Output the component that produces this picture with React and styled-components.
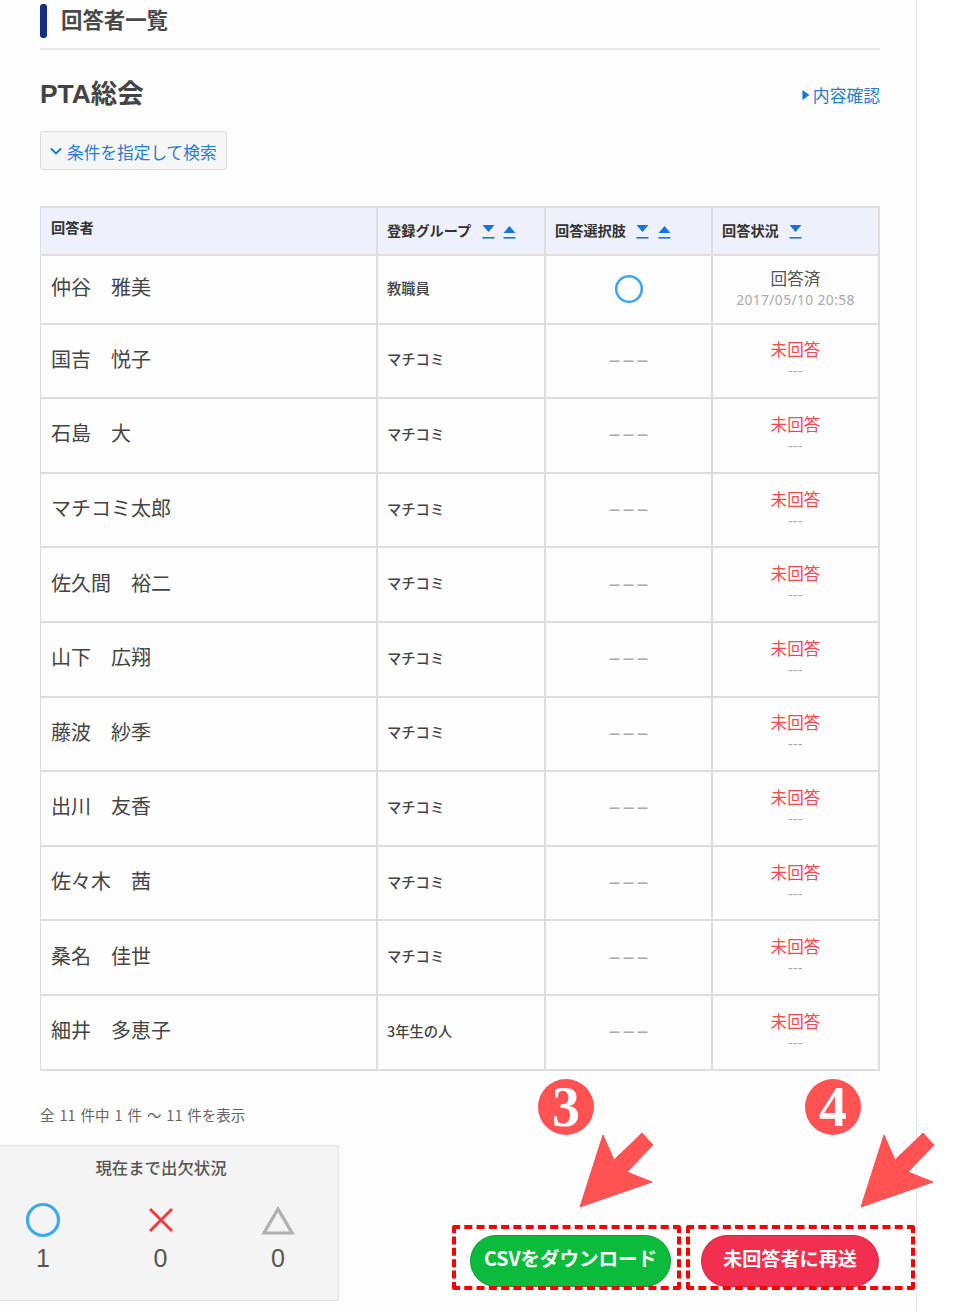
import React from "react";
import styled, { createGlobalStyle } from "styled-components";

const GlobalStyle = createGlobalStyle`
    html, body {
        margin: 0;
        padding: 0;
        background: #fff;
    }
    body {
        font-family: "Noto Sans CJK JP", "Noto Sans", sans-serif;
        color: #444;
    }
`;

const Page = styled.div`
    position: relative;
    width: 917px;
    height: 1312px;
    box-sizing: border-box;
    background: #fdfdfd;
    border-right: 1px solid #e4e4e4;
`;
const Content = styled.div`
    padding: 0 36px 0 40px;
`;
const SectionHead = styled.div`
    display: flex;
    align-items: center;
    gap: 14px;
    height: 50px;
    box-sizing: border-box;
    padding: 3px 0 9px;
    border-bottom: 2px solid #e6e6e6;
`;
const SectionBar = styled.span`
    width: 7px;
    height: 34px;
    border-radius: 3px;
    background: #152d85;
`;
const SectionTitle = styled.h2`
    margin: -4px 0 0;
    font-size: 21.4px;
    line-height: 30px;
    font-weight: 700;
    color: #4a4a4a;
`;
const TitleRow = styled.div`
    display: flex;
    justify-content: space-between;
    align-items: center;
    margin-top: 25px;
    height: 38px;
`;
const EventTitle = styled.h1`
    margin: 0;
    font-family: "Liberation Sans", "Noto Sans CJK JP", sans-serif;
    font-size: 26.4px;
    line-height: 38px;
    font-weight: 700;
    color: #444;
`;
const DetailLink = styled.a`
    display: flex;
    align-items: center;
    gap: 3px;
    margin-top: 2px;
    font-size: 16.8px;
    color: #2a7bd3;
    svg {
        display: block;
    }
`;
const SearchButton = styled.button`
    display: flex;
    align-items: center;
    gap: 5px;
    width: 187px;
    height: 39px;
    margin-top: 18px;
    padding: 2px 0 0 9px;
    box-sizing: border-box;
    background: #f6f6f6;
    border: 1px solid #dcdcdc;
    border-radius: 3px;
    font-family: inherit;
    font-size: 16.7px;
    white-space: nowrap;
    color: #2a7bd3;
    svg {
        flex-shrink: 0;
        margin-top: -2px;
    }
`;
const Table = styled.div`
    margin-top: 36px;
    display: grid;
    grid-template-columns: 337px 168px 167px 167px;
    border-top: 2px solid #dedede;
    border-left: 1px solid #dedede;
    width: 840px;
    box-sizing: border-box;
`;
const HeadCell = styled.div`
    display: flex;
    align-items: center;
    gap: 10.5px;
    height: 48px;
    padding: ${(p) => (p.$high ? "0 0 9px 10px" : "0 0 3px 9px")};
    box-sizing: border-box;
    background: #eef1fc;
    border-right: 2px solid #dedede;
    border-bottom: 2px solid #dedede;
    font-size: 14.2px;
    font-weight: 700;
    color: #333;
`;
const SortIcons = styled.span`
    display: flex;
    gap: 8.5px;
    margin-top: 4px;
`;
const Cell = styled.div`
    display: flex;
    align-items: center;
    justify-content: ${(p) => (p.$center ? "center" : "flex-start")};
    height: ${(p) => (p.$first ? "68.6px" : "74.6px")};
    padding: 0 10px;
    box-sizing: border-box;
    border-right: 2px solid #dedede;
    border-bottom: 2px solid #dedede;
`;
const NameText = styled.span`
    margin-bottom: 5px;
    font-size: 20px;
    color: #444;
    white-space: pre;
`;
const GroupText = styled.span`
    margin: 0 0 4px -1px;
    font-size: 14.3px;
    font-weight: 500;
    color: #444;
`;
const NoAnswer = styled.span`
    margin-bottom: 2px;
    font-size: 14px;
    font-weight: 700;
    color: #aaa;
`;
const ChoiceMark = styled.svg`
    margin-bottom: 1px;
`;
const StatusBox = styled.div`
    display: flex;
    flex-direction: column;
    align-items: center;
    margin-top: -4px;
`;
const StatusLabel = styled.span`
    font-size: 16.6px;
    line-height: 24px;
    color: ${(p) => (p.$pending ? "#f9494d" : "#555")};
`;
const StatusDate = styled.span`
    font-family: "Noto Sans", sans-serif;
    font-size: 13.8px;
    line-height: 19px;
    color: #aaa;
    letter-spacing: 0.4px;
`;
const CountText = styled.p`
    margin: 34px 0 0;
    font-size: 14.5px;
    line-height: 20px;
    word-spacing: 1.7px;
    color: #666;
`;
const BottomRow = styled.div`
    display: flex;
    justify-content: space-between;
    align-items: flex-start;
    padding-right: 37px;
    margin-top: 20px;
`;
const SummaryPanel = styled.div`
    width: 339px;
    height: 156px;
    box-sizing: border-box;
    padding-top: 9px;
    background: #f4f4f4;
    border: 1px solid #e2e2e2;
    border-left: none;
    border-radius: 0 3px 3px 0;
`;
const SummaryTitle = styled.div`
    text-align: center;
    font-size: 16.4px;
    line-height: 24px;
    font-weight: 500;
    color: #555;
    margin-right: 16px;
`;
const SummaryGrid = styled.div`
    display: grid;
    grid-template-columns: repeat(3, 60px);
    column-gap: 57.5px;
    padding-left: 13px;
    margin-top: 23px;
`;
const SummaryItem = styled.div`
    display: flex;
    flex-direction: column;
    align-items: center;
    font-family: "Liberation Sans", sans-serif;
    font-size: 25px;
    line-height: 30px;
    color: #555;
    svg {
        display: block;
        margin-bottom: 5px;
    }
`;
const ButtonRow = styled.div`
    display: flex;
    gap: 30px;
    margin-top: 90px;
`;
const PillButton = styled.button`
    width: ${(p) => p.$width}px;
    height: 52px;
    border-radius: 27px;
    border: 1px solid ${(p) => p.$edge};
    background: ${(p) => p.$bg};
    color: #fff;
    font-family: inherit;
    font-size: ${(p) => p.$size}px;
    font-weight: 700;
    white-space: nowrap;
    padding: 0 0 6px;
`;
const DashedBox = styled.div`
    position: absolute;
    top: 1225px;
    left: ${(p) => p.$left}px;
    width: ${(p) => p.$width}px;
    height: 65px;
    box-sizing: border-box;
    border: 4px dashed #f60000;
    border-radius: 3px;
    pointer-events: none;
`;
const NumberBadge = styled.div`
    position: absolute;
    top: 1079px;
    left: ${(p) => p.$left}px;
    width: 56px;
    height: 56px;
    border-radius: 50%;
    display: flex;
    align-items: center;
    justify-content: center;
    background: #ff5252;
    color: #fff;
    font-family: "Liberation Serif", serif;
    font-size: 56px;
    font-weight: 700;
    line-height: 1;
`;
const ArrowMark = styled.svg`
    position: absolute;
    top: 1130px;
    left: ${(p) => p.$left}px;
`;

const SortDown = () => (
    <svg width="13" height="16" viewBox="0 0 13 16">
        <path d="M0.5 1h12l-6 7z" fill="#1a73d8" />
        <rect x="0.5" y="13" width="12" height="1.6" fill="#1a73d8" />
    </svg>
);
const SortUp = () => (
    <svg width="13" height="16" viewBox="0 0 13 16">
        <path d="M0.5 9h12l-6-7z" fill="#1a73d8" />
        <rect x="0.5" y="13" width="12" height="1.6" fill="#1a73d8" />
    </svg>
);

const Arrow = ({ left }) => (
    <ArrowMark $left={left} width="76" height="80" viewBox="0 0 76 80">
        <path
            d="M2 77 L25 5 L36 30 L64 3 L75 15 L49 42 L74 52 Z"
            fill="#ff5252"
            stroke="#ff5252"
            strokeWidth="1"
            strokeLinejoin="round"
        />
    </ArrowMark>
);

const rows = [
    ["国吉　悦子", "マチコミ"],
    ["石島　大", "マチコミ"],
    ["マチコミ太郎", "マチコミ"],
    ["佐久間　裕二", "マチコミ"],
    ["山下　広翔", "マチコミ"],
    ["藤波　紗季", "マチコミ"],
    ["出川　友香", "マチコミ"],
    ["佐々木　茜", "マチコミ"],
    ["桑名　佳世", "マチコミ"],
    ["細井　多恵子", "3年生の人"],
];

const App = () => {
    return (
        <Page>
            <GlobalStyle />
            <Content>
                <SectionHead>
                    <SectionBar />
                    <SectionTitle>回答者一覧</SectionTitle>
                </SectionHead>
                <TitleRow>
                    <EventTitle>PTA総会</EventTitle>
                    <DetailLink>
                        <svg width="8" height="10" viewBox="0 0 8 10">
                            <path d="M0.5 0v10l7-5z" fill="#1a73d8" />
                        </svg>
                        内容確認
                    </DetailLink>
                </TitleRow>
                <SearchButton>
                    <svg width="12" height="8" viewBox="0 0 12 8">
                        <path d="M1 1.5l5 5 5-5" fill="none" stroke="#1a73d8" strokeWidth="1.8" />
                    </svg>
                    条件を指定して検索
                </SearchButton>
                <Table>
                    <HeadCell $high>回答者</HeadCell>
                    <HeadCell>
                        登録グループ
                        <SortIcons>
                            <SortDown />
                            <SortUp />
                        </SortIcons>
                    </HeadCell>
                    <HeadCell>
                        回答選択肢
                        <SortIcons>
                            <SortDown />
                            <SortUp />
                        </SortIcons>
                    </HeadCell>
                    <HeadCell>
                        回答状況
                        <SortIcons>
                            <SortDown />
                        </SortIcons>
                    </HeadCell>

                    <Cell $first>
                        <NameText>仲谷　雅美</NameText>
                    </Cell>
                    <Cell $first>
                        <GroupText>教職員</GroupText>
                    </Cell>
                    <Cell $first $center>
                        <ChoiceMark width="30" height="30" viewBox="0 0 30 30">
                            <circle cx="15" cy="15" r="12.8" fill="none" stroke="#3fa9ea" strokeWidth="2.6" />
                        </ChoiceMark>
                    </Cell>
                    <Cell $first $center>
                        <StatusBox>
                            <StatusLabel>回答済</StatusLabel>
                            <StatusDate>2017/05/10 20:58</StatusDate>
                        </StatusBox>
                    </Cell>

                    {rows.map(([name, group]) => (
                        <React.Fragment key={name}>
                            <Cell>
                                <NameText>{name}</NameText>
                            </Cell>
                            <Cell>
                                <GroupText>{group}</GroupText>
                            </Cell>
                            <Cell $center>
                                <NoAnswer>－－－</NoAnswer>
                            </Cell>
                            <Cell $center>
                                <StatusBox>
                                    <StatusLabel $pending>未回答</StatusLabel>
                                    <StatusDate>---</StatusDate>
                                </StatusBox>
                            </Cell>
                        </React.Fragment>
                    ))}
                </Table>
                <CountText>全 11 件中 1 件 ～ 11 件を表示</CountText>
            </Content>
            <BottomRow>
                <SummaryPanel>
                    <SummaryTitle>現在まで出欠状況</SummaryTitle>
                    <SummaryGrid>
                        <SummaryItem>
                            <svg width="36" height="36" viewBox="0 0 36 36">
                                <circle cx="18" cy="18" r="15.5" fill="none" stroke="#3fa9ea" strokeWidth="3.2" />
                            </svg>
                            1
                        </SummaryItem>
                        <SummaryItem>
                            <svg width="36" height="36" viewBox="0 0 36 36">
                                <path d="M7 7l22 22M29 7L7 29" fill="none" stroke="#f5393d" strokeWidth="3" />
                            </svg>
                            0
                        </SummaryItem>
                        <SummaryItem>
                            <svg width="36" height="36" viewBox="0 0 36 36">
                                <path d="M18 7L32 31H4z" fill="none" stroke="#b0b0b0" strokeWidth="3.2" />
                            </svg>
                            0
                        </SummaryItem>
                    </SummaryGrid>
                </SummaryPanel>
                <ButtonRow>
                    <PillButton $width={201} $size={19.5} $bg="#0abb3c" $edge="#14993a">
                        CSVをダウンロード
                    </PillButton>
                    <PillButton $width={178} $size={19.1} $bg="#f22f4e" $edge="#cf2a48">
                        未回答者に再送
                    </PillButton>
                </ButtonRow>
            </BottomRow>

            <NumberBadge $left={538}>3</NumberBadge>
            <NumberBadge $left={805}>4</NumberBadge>
            <Arrow left={578} />
            <Arrow left={859} />
            <DashedBox $left={452} $width={229} />
            <DashedBox $left={686} $width={229} />
        </Page>
    );
};

export default App;
